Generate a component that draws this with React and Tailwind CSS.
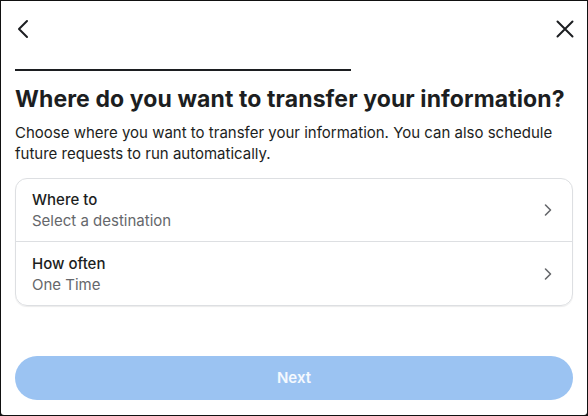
import React from "react";

function Row({ label, value, last }) {
  return (
    <div className={`flex items-center justify-between h-[63px] pl-4 pr-[19px] ${last ? "" : "border-b border-[#dddfe2]"}`}>
      <div className="flex flex-col">
        <span className="text-[15px] leading-[21px] font-medium text-[#1c1e21]">{label}</span>
        <span className="text-[15px] leading-[21px] text-[#65676b]">{value}</span>
      </div>
      <svg width="10" height="14" viewBox="0 0 10 14" fill="none">
        <path d="M2.5 2 L7.5 7 L2.5 12" stroke="#65676b" strokeWidth="1.6" strokeLinecap="round" strokeLinejoin="round" />
      </svg>
    </div>
  );
}

export default function App() {
  return (
    <div className="w-[588px] h-[416px] bg-[#111] p-px" style={{ fontFamily: "Inter, 'Noto Sans', sans-serif" }}>
      <div className="w-full h-full bg-white rounded-b-[3px] flex flex-col px-[14px]">
        <div className="flex items-center justify-between h-[54px] pt-[1px]">
          <svg width="14" height="20" viewBox="0 0 14 20" fill="none" className="ml-[1px]">
            <path d="M11 2 L3 10 L11 18" stroke="#1c1e21" strokeWidth="2" strokeLinecap="round" strokeLinejoin="round" />
          </svg>
          <svg width="18" height="18" viewBox="0 0 18 18" fill="none" className="mr-[-1px]">
            <path d="M1.5 1.5 L16.5 16.5 M16.5 1.5 L1.5 16.5" stroke="#1c1e21" strokeWidth="2" strokeLinecap="round" />
          </svg>
        </div>
        <div className="w-[336px] h-[2px] bg-[#1c1e21] mt-[14px]" />
        <h1 className="mt-[14px] text-[23px] leading-[28px] font-bold text-[#1c1e21] tracking-[0.1px] whitespace-nowrap">
          Where do you want to transfer your information?
        </h1>
        <p className="mt-[9px] text-[15px] leading-[21px] text-[#1c1e21]">
          Choose where you want to transfer your information. You can also schedule future requests to run automatically.
        </p>
        <div className="mt-[14px] border border-[#dddfe2] rounded-[12px] shadow-[0_1px_1px_rgba(0,0,0,0.08)]">
          <Row label="Where to" value="Select a destination" />
          <Row label="How often" value="One Time" last />
        </div>
        <div className="flex-1" />
        <button className="h-[44px] mb-[15px] rounded-full bg-[#9bc3f2] text-white/90 text-[15px] font-semibold">
          Next
        </button>
      </div>
    </div>
  );
}
